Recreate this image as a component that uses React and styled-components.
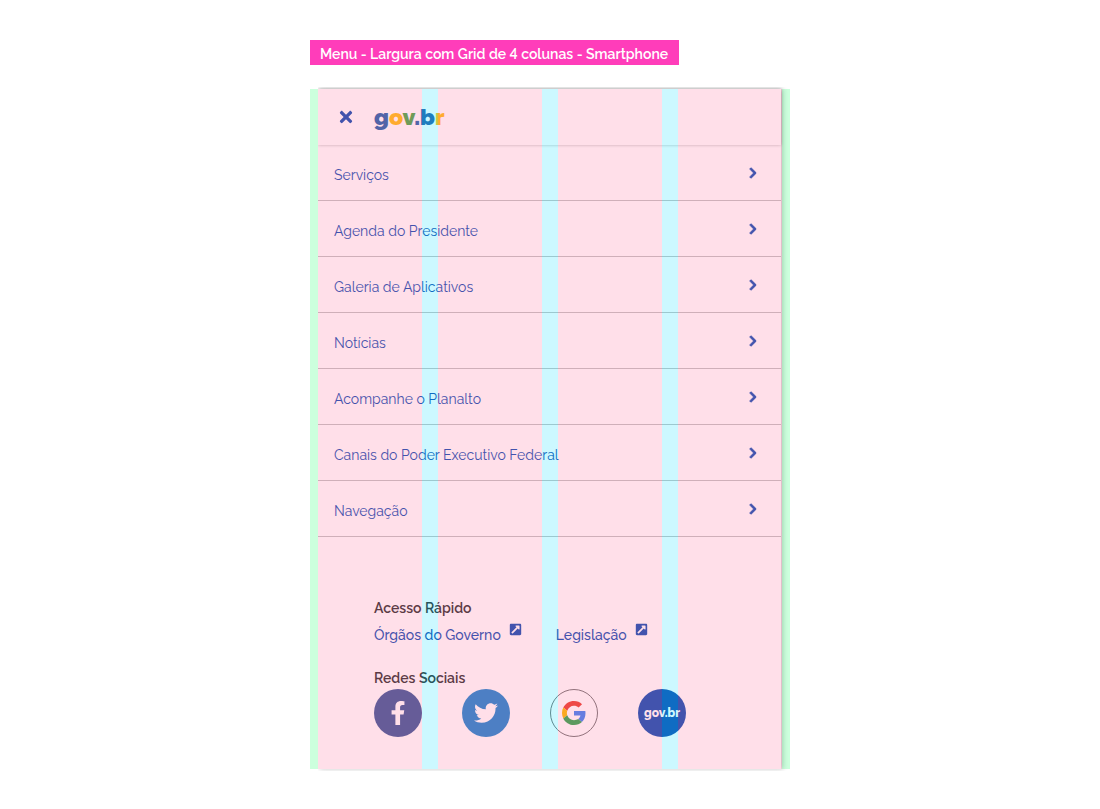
import React from "react";
import styled, { createGlobalStyle } from "styled-components";
import {
  FaTimes,
  FaChevronRight,
  FaExternalLinkSquareAlt,
  FaFacebookF,
  FaTwitter,
} from "react-icons/fa";

const GlobalStyle = createGlobalStyle`
  *, *::before, *::after { box-sizing: border-box; }
  body {
    margin: 0;
    background: #fff;
    color: #333;
    font-family: Raleway, Lato, "Open Sans", sans-serif;
    font-size: 14px;
    font-variant-numeric: lining-nums;
    line-height: 24px;
  }
`;

const Page = styled.main`
  width: 100%;
  max-width: 480px;
  margin: 0 auto;
  padding: 40px 0;
`;

const Title = styled.h1`
  width: fit-content;
  margin: 0 0 24px;
  padding: 3px 11px 0 10px;
  background: #ff3dba;
  color: #fff;
  font-size: 14px;
  font-weight: 600;
  line-height: 22px;
`;

const Frame = styled.div`
  position: relative;
  padding: 0 9px 0 8px;
`;

const Panel = styled.div`
  min-height: 680px;
  background: #fff;
  box-shadow: 2px 0 5px rgba(0, 0, 0, 0.22);
  clip-path: inset(-2px -9px -2px 0);
`;

const GridOverlay = styled.div`
  position: absolute;
  inset: 0;
  display: flex;
  pointer-events: none;
`;

const GridMargin = styled.span`
  flex: 0 0 8px;
  background: rgba(0, 255, 85, 0.2);
`;

const GridColumn = styled.span`
  flex: 1;
  background: rgba(255, 95, 145, 0.2);
`;

const GridGutter = styled.span`
  flex: 0 0 16px;
  background: rgba(0, 220, 255, 0.2);
`;

const Header = styled.header`
  display: flex;
  align-items: center;
  gap: 16px;
  height: 56px;
  padding: 0 16px;
  box-shadow: 0 0 3px rgba(0, 0, 0, 0.28);
`;

const CloseButton = styled.button`
  display: grid;
  place-items: center;
  width: 24px;
  height: 40px;
  padding: 0;
  border: 0;
  background: none;
  color: #1351b4;
  font-size: 18px;
  cursor: pointer;
`;

const Logo = styled.a`
  font-size: 23px;
  font-weight: 900;
  line-height: 32px;
  text-decoration: none;
`;

const LogoLetter = styled.span`
  color: ${({ $color }) => $color};
`;

const MenuList = styled.ul`
  margin: 0;
  padding: 0;
  list-style: none;
`;

const MenuLink = styled.a`
  display: flex;
  align-items: center;
  justify-content: space-between;
  height: 56px;
  padding: 0 22px 0 16px;
  border-bottom: 1px solid #c4c4c4;
  color: #1351b4;
  font-weight: 400;
  text-decoration: none;

  svg {
    font-size: 12px;
    stroke: currentColor;
    stroke-width: 40px;
  }
`;

const MenuText = styled.span`
  padding-top: 4px;
`;

const Footer = styled.footer`
  display: grid;
  gap: 20px;
  padding: 60px 16px 28px 56px;
`;

const SectionTitle = styled.h2`
  margin: 0;
  font-size: 14px;
  font-weight: 600;
  line-height: 22px;
`;

const QuickLinks = styled.div`
  display: flex;
  gap: 34px;
  padding-top: 4px;
`;

const QuickLink = styled.a`
  display: flex;
  gap: 8px;
  color: #1351b4;
  font-weight: 500;
  text-decoration: none;

  svg { font-size: 13px; }
`;

const SocialLinks = styled.div`
  display: flex;
  gap: 40px;
`;

const SocialLink = styled.a`
  display: grid;
  place-items: center;
  width: 48px;
  height: 48px;
  border: ${({ $border }) => ($border ? `1px solid ${$border}` : "0")};
  border-radius: 50%;
  background: ${({ $color }) => $color};
  color: #fff;
  font-size: ${({ $size }) => $size || 24}px;
  font-weight: 800;
  line-height: 24px;
  text-decoration: none;
`;

const MENU = [
  "Serviços",
  "Agenda do Presidente",
  "Galeria de Aplicativos",
  "Notícias",
  "Acompanhe o Planalto",
  "Canais do Poder Executivo Federal",
  "Navegação",
];

const LOGO = [
  ["g", "#2766ae"],
  ["o", "#ffbf16"],
  ["v", "#4baa4a"],
  [".", "#2766ae"],
  ["b", "#2766ae"],
  ["r", "#ffbf16"],
];

function GoogleIcon() {
  return (
    <svg width="24" height="24" viewBox="0 0 48 48" aria-hidden="true">
      <path fill="#EA4335" d="M24 9.5c3.54 0 6.71 1.22 9.21 3.6l6.85-6.85C35.9 2.38 30.47 0 24 0 14.62 0 6.51 5.38 2.56 13.22l7.98 6.19C12.43 13.72 17.74 9.5 24 9.5z" />
      <path fill="#4285F4" d="M46.98 24.55c0-1.57-.15-3.09-.38-4.55H24v9.02h12.94c-.58 2.96-2.26 5.48-4.78 7.18l7.73 6c4.51-4.18 7.09-10.36 7.09-17.65z" />
      <path fill="#FBBC05" d="M10.53 28.59c-.48-1.45-.76-2.99-.76-4.59s.27-3.14.76-4.59l-7.98-6.19C.92 16.46 0 20.12 0 24c0 3.88.92 7.54 2.56 10.78l7.97-6.19z" />
      <path fill="#34A853" d="M24 48c6.48 0 11.93-2.13 15.89-5.81l-7.73-6c-2.15 1.45-4.92 2.3-8.16 2.3-6.26 0-11.57-4.22-13.47-9.91l-7.98 6.19C6.51 42.62 14.62 48 24 48z" />
    </svg>
  );
}

export default function App() {
  return (
    <>
      <GlobalStyle />
      <Page>
        <Title>Menu - Largura com Grid de 4 colunas - Smartphone</Title>
        <Frame>
          <Panel>
            <Header>
              <CloseButton type="button" aria-label="Fechar menu">
                <FaTimes />
              </CloseButton>
              <Logo href="#inicio">
                {LOGO.map(([letter, color]) => (
                  <LogoLetter key={letter} $color={color}>{letter}</LogoLetter>
                ))}
              </Logo>
            </Header>
            <nav>
              <MenuList>
                {MENU.map((item) => (
                  <li key={item}>
                    <MenuLink href="#menu">
                      <MenuText>{item}</MenuText>
                      <FaChevronRight />
                    </MenuLink>
                  </li>
                ))}
              </MenuList>
            </nav>
            <Footer>
              <section>
                <SectionTitle>Acesso Rápido</SectionTitle>
                <QuickLinks>
                  <QuickLink href="#orgaos">
                    Órgãos do Governo <FaExternalLinkSquareAlt />
                  </QuickLink>
                  <QuickLink href="#legislacao">
                    Legislação <FaExternalLinkSquareAlt />
                  </QuickLink>
                </QuickLinks>
              </section>
              <section>
                <SectionTitle>Redes Sociais</SectionTitle>
                <SocialLinks>
                  <SocialLink href="#facebook" aria-label="Facebook" $color="#405c9a">
                    <FaFacebookF />
                  </SocialLink>
                  <SocialLink href="#twitter" aria-label="Twitter" $color="#2188d1">
                    <FaTwitter />
                  </SocialLink>
                  <SocialLink href="#google" aria-label="Google" $color="#fff" $border="#777">
                    <GoogleIcon />
                  </SocialLink>
                  <SocialLink href="#govbr" $color="#1351b4" $size={12}>
                    gov.br
                  </SocialLink>
                </SocialLinks>
              </section>
            </Footer>
          </Panel>
          <GridOverlay>
            <GridMargin />
            <GridColumn />
            <GridGutter />
            <GridColumn />
            <GridGutter />
            <GridColumn />
            <GridGutter />
            <GridColumn />
            <GridMargin />
          </GridOverlay>
        </Frame>
      </Page>
    </>
  );
}
